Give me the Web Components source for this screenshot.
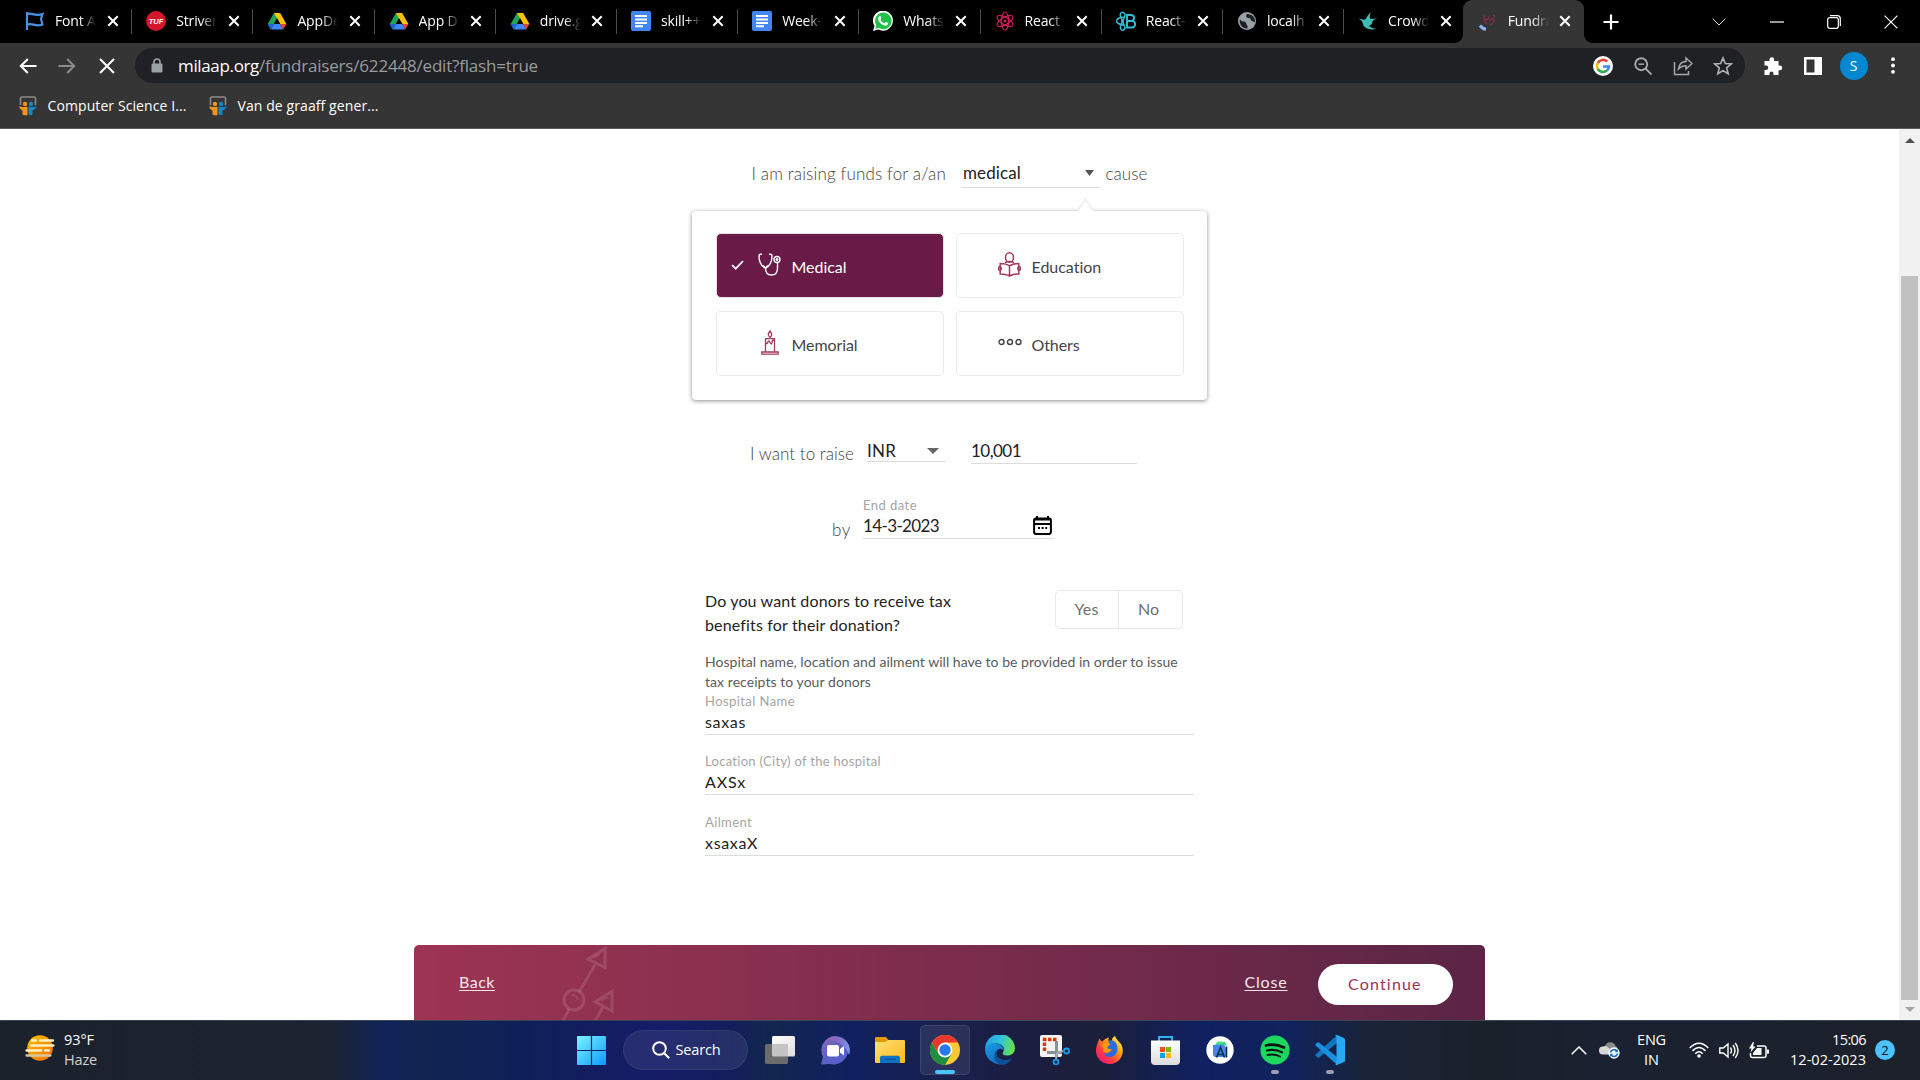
<!DOCTYPE html>
<html lang="en"><head><meta charset="utf-8"><title>Fundraiser edit</title>
<style>
html,body{margin:0;width:1920px;height:1080px;overflow:hidden;background:#fff}
body{display:flex;flex-direction:column;font-family:"Open Sans","Noto Sans",sans-serif}
</style></head><body>
<tab-strip></tab-strip>
<tool-bar></tool-bar>
<bookmark-bar></bookmark-bar>
<page-view></page-view>
<task-bar></task-bar>
<script>
const atom=(c,w)=>`<g fill="none" stroke="${c}" stroke-width="${w}"><ellipse cx="10" cy="10" rx="9" ry="3.6" transform="rotate(30 10 10)"/><ellipse cx="10" cy="10" rx="9" ry="3.6" transform="rotate(90 10 10)"/><ellipse cx="10" cy="10" rx="9" ry="3.6" transform="rotate(150 10 10)"/></g><circle cx="10" cy="10" r="1.6" fill="${c}"/>`;
const drive=`<path d="M7 2h6.2L6.8 13.2 3.7 18.4.7 13z" fill="#1ea55b"/><path d="M7 2h6.2l6.2 11h-6.2z" fill="#ffc107"/><path d="M.7 13h6.4l-3.2 5.6z" fill="#1a63d9"/><path d="M7.1 13h6.2l2.9 5.6H3.9z" fill="#4285f4"/><path d="M13.3 13h6.1l-3.2 5.6z" fill="#ea4335"/><path d="M10 7.3l3.3 5.7H6.8z" fill="#000"/>`;
const doc=`<rect x="0" y="0" width="20" height="20" rx="2" fill="#4285f4"/><path d="M4 5h12M4 8.5h12M4 12h12M4 15.3h8" stroke="#fff" stroke-width="1.9"/>`;
// name: [width, height, markup]
const ICONS={
flag:[20,20,`<path d="M2 1v18M2 3.500c4-3 7 2.500 15.500-.5l-1.500 5 1.500 5.500c-7 3-11-2.500-15.500.500" fill="none" stroke="#4a90e2" stroke-width="2.200"/>`],
tuf:[20,20,`<circle cx="10" cy="10" r="10" fill="#d5152b"/><text x="10" y="13" font-family="Liberation Sans" font-weight="700" font-style="italic" font-size="7.500" text-anchor="middle" fill="#fff">TUF</text>`],
drive:[20,20,drive],doc:[20,20,doc],
whats:[20,20,`<path d="M0 20l1.500-5A10 10 0 1 1 5.500 18.600z" fill="#fff"/><path d="M2.200 17.800l1-3.600A8.300 8.300 0 1 1 6 17z" fill="#20c04b"/><path d="M6 5.600c1-1 1.600-.4 2 .8.5 1.200.2 1.500-.5 2.300.8 1.700 2 2.800 3.800 3.600l1.200-1.300c.6-.4 2.600.7 2.700 1.200-.2 2-2 2.800-3.600 2.300-3.600-1-6-3.600-6.500-6.300 0-1 .300-2 .9-2.600z" fill="#fff"/>`],
react:[20,20,atom('#d01c54',1.200)],
rb:[20,20,`<g fill="none" stroke="#35b8d3" stroke-width="1.500"><path d="M9 3C6-.5 3 2 5 6.500c2 5 4 9 4 11-2 3-6 2-4-4 2-4 4-7 4-10.500zM8 6C4 6 .5 8 .5 10S4 14 8 14"/></g><path d="M11 4h4a3 3 0 0 1 0 6h-4zM11 10h5a3.200 3.200 0 0 1 0 6.400h-5z" fill="none" stroke="#35b8d3" stroke-width="2"/><circle cx="6.500" cy="10" r="1.500" fill="#35b8d3"/>`],
globe:[20,20,`<circle cx="10" cy="10" r="9" fill="#9aa0a6"/><path d="M3 8c2 4 5 1 6 4s2 2 1.500 5.500c-5 .5-9-5-7.500-9.500zM10 3c-2 2-.5 4 2 4s1 3 4 3.500 1 2 2 1c.5-4-1.500-8-8-8.500z" fill="#202124"/>`],
bird:[20,20,`<path d="M1 7.500c2 .5 4.500 1.500 6 1 1.500-1 3-5 6-7.500-1.500 3-1.500 5-.500 7C14 7.500 16 7.800 19 7.500c-2.500 1-4 1.500-4.500 3-.3 3-2 4-4 4.500 2 1 4 2.500 8 2.800-4 1.200-9.500.7-12-2C4 13.500 6.500 12 1 7.500z" fill="#3fbcb1"/>`],
mila:[20,20,`<path d="M7 4c-2 3-1 7 2 9M8 8c2 2 3-1 3-3M12 10c1.500-3 4-4 4-1s-2 4-4 5M15 4.500c1-1 2 0 1.500 1.500M6 7l3 2" fill="none" stroke="#8c2a50" stroke-width="1.200"/><path d="M2 14.500q2.500 3.300 6 3.800" fill="none" stroke="#8ab4f8" stroke-width="3"/>`],
x:[12,12,`<path d="M1.300 1.300l9.400 9.400M10.700 1.300l-9.400 9.400" stroke="currentColor" stroke-width="2"/>`],
plus:[16,16,`<path d="M8 .5v15M.5 8h15" stroke="#fff" stroke-width="2.200"/>`],
wchev:[14,8,`<path d="M.7.7L7 7 13.300.7" fill="none" stroke="#ddd" stroke-width="1"/>`],
wmin:[14,2,`<path d="M0 1h14" stroke="#fff" stroke-width="1.200"/>`],
wrest:[14,14,`<rect x=".7" y="2.700" width="10.600" height="10.600" rx="2" fill="none" stroke="#fff" stroke-width="1.200"/><path d="M3 .7h7.300a3 3 0 0 1 3 3V11" fill="none" stroke="#fff" stroke-width="1.200"/>`],
wx:[14,14,`<path d="M.6.6l12.800 12.800M13.400.6L.6 13.400" stroke="#fff" stroke-width="1.200"/>`],
back:[18,16,`<path d="M17.500 8H1.800M8.800 1L1.800 8l7 7" fill="none" stroke="#fff" stroke-width="2"/>`],
fwd:[18,16,`<path d="M.5 8h15.700M9.200 1l7 7-7 7" fill="none" stroke="#8b8b8b" stroke-width="2"/>`],
stop:[16,16,`<path d="M1 1l14 14M15 1L1 15" stroke="#fff" stroke-width="2"/>`],
lock:[12,15,`<rect y="5.500" x=".5" width="11" height="9" rx="1.200" fill="#9aa0a6"/><path d="M3 6V4a3 3 0 0 1 6 0v2" fill="none" stroke="#9aa0a6" stroke-width="1.600"/>`],
google:[20,20,`<circle cx="10" cy="10" r="10" fill="#fff"/><g fill="none" stroke-width="2.600"><path d="M14.300 5.700A6 6 0 0 0 4.700 7.200" stroke="#ea4335"/><path d="M4.700 7.200a6 6 0 0 0 0 5.600" stroke="#fbbc05"/><path d="M4.700 12.800a6 6 0 0 0 9.200 1.700" stroke="#34a853"/><path d="M13.900 14.500A5.500 5.500 0 0 0 16 10.500H10" stroke="#4285f4"/></g>`],
zoomo:[18,18,`<g fill="none" stroke="#a5a7aa" stroke-width="1.900"><circle cx="7.200" cy="7.200" r="6"/><path d="M11.500 11.500l6 6"/><path d="M4.500 7.200h5.500" stroke-width="1.500"/></g>`],
share:[20,20,`<g fill="none" stroke="#a5a7aa" stroke-width="1.500"><path d="M1.500 6v12.500h14V15"/><path d="M13 2l6 5.500-6 5.500v-3.200c-3.500 0-5.500 1-7.500 3.200.5-4 3-7.500 7.500-7.500z"/></g>`],
star:[20,20,`<path d="M10 2l2.300 5.500 6 .5-4.600 3.900 1.500 5.900L10 14.600 4.800 17.800l1.500-5.900L1.700 8l6-.5z" fill="none" stroke="#b0b2b5" stroke-width="1.600"/>`],
puzzle:[20,20,`<path d="M1.500 5h5V3.500a2.300 2.300 0 0 1 4.600 0V5h4.400v4.500h1.300a2.400 2.400 0 0 1 0 4.800h-1.300V19h-5v-1.500a2 2 0 0 0-4 0V19h-5v-5H3a2 2 0 0 0 0-4.500H1.500z" fill="#fff"/>`],
side:[18,18,`<path d="M0 0h18v18H0zM2.500 2.500v13h8v-13z" fill="#fff" fill-rule="evenodd"/>`],
dots:[4,17,`<circle cx="2" cy="2.200" r="1.900" fill="#fff"/><circle cx="2" cy="8.500" r="1.900" fill="#fff"/><circle cx="2" cy="14.800" r="1.900" fill="#fff"/>`],
slide:[18,20,`<path d="M1.500 9V2.500q0-1.500 1.500-1.500h12q1.500 0 1.500 1.500V9" fill="none" stroke="#8a8a8a" stroke-width="1.600"/><circle cx="6" cy="8" r="2.200" fill="#f7941e"/><circle cx="12" cy="8" r="2.200" fill="#1189c9"/><path d="M.5 10c2 1.500 5 1 8 .800V19c-2 .5-5 .3-5-1v-3.500C1.500 14 0 12 .5 10z" fill="#f7941e"/><path d="M17.500 10c-2 1.500-5 1-8 .800V18c2 2 4 1 4 0v-3.500c2-.5 4-2.500 4-4.500z" fill="#1189c9"/>`],
caret:[9,6,`<path d="M0 0h9L4.500 6z" fill="#555"/>`],caretw:[12,6,`<path d="M0 0h12L6 6z" fill="#666"/>`],
tip:[17,14,`<path d="M1 13L8.500 1 16 13v1H1z" fill="#fff"/><path d="M.8 13L8.500 1.200 16.200 13" fill="none" stroke="#f0f0f0" stroke-width="1.800"/>`],
check:[13,10,`<path d="M1 5l3.700 3.700L12 1" fill="none" stroke="#fff" stroke-width="1.700"/>`],
steth:[23,23,`<g fill="none" stroke="#fff" stroke-width="1.400"><path d="M4 1.200H2.500Q1 1.200 1 3c0 6 2 10 6.500 12C12 13 14 9 14 3q0-1.800-1.500-1.800H11"/><path d="M7.500 15c0 4 2 7 6 7s6-3 6-7V9.500"/><circle cx="19" cy="6.500" r="3"/><circle cx="19" cy="6.500" r=".8"/><path d="M5 12.500l2.500 2.500 2.500-2.500"/></g>`],
edu:[23,25,`<g fill="none" stroke="#a53a5f" stroke-width="1.500"><ellipse cx="11.500" cy="5.500" rx="4" ry="4.700"/><path d="M7 10.500q4.500-2 9 0M11.500 14C9 12 5 11.500 2.200 11.500V22c4 0 7 .5 9.300 2 2.300-1.500 5.300-2 9.300-2V11.500c-2.800 0-6.800.5-9.300 2.500zV24"/><ellipse cx="1.900" cy="16.500" rx="1.300" ry="2"/><ellipse cx="21.100" cy="16.500" rx="1.300" ry="2"/></g>`],
candle:[18,25,`<g fill="none" stroke="#a53a5f" stroke-width="1.300"><path d="M9 .8c2 2.500 2.500 5.700 0 6-2.500-.3-2-3.500 0-6zM9 7v2M4.500 22V8.700h9V22M.8 22h16.400v2.200H.8zM4.500 12c1.500 3 2.500 1 2.500-.5 1-2 2 1 2.500 2s2 0 1.500-2.500q1-1 2.500-1"/></g>`],
others:[24,8,`<g fill="none" stroke="#444" stroke-width="1.400"><circle cx="3.500" cy="4" r="2.500"/><circle cx="12" cy="4" r="2.500"/><circle cx="20.500" cy="4" r="2.500"/></g>`],
cal:[19,19,`<path d="M4 0v3M15 0v3" stroke="#000" stroke-width="2"/><rect x="1.100" y="2.600" width="16.800" height="15.300" rx="1.800" fill="none" stroke="#000" stroke-width="2"/><path d="M1 3.500h17M1 8h17" stroke="#000" stroke-width="1.800"/><path d="M5 12h9.500" stroke="#000" stroke-width="2" stroke-dasharray="2 1.600"/>`],
trail:[64,75,`<g fill="none" stroke="#fff" stroke-opacity=".12" stroke-width="3"><path d="M46 3.500L29 14l17 8.500zM37 18L20 47M53 46.500L36 57l17 9zM44 62l-8 14M10 64l-6 12"/><circle cx="15" cy="55" r="10"/></g><path d="M13 50q5 0 6 5M34 13l7-4M42 56l7-4" fill="none" stroke="#fff" stroke-opacity=".1" stroke-width="2"/>`],
up:[10,5,`<path d="M5 0l5 5H0z" fill="#505050"/>`],down:[10,5,`<path d="M0 0h10L5 5z" fill="#a3a3a3"/>`],
haze:[30,28,`<defs><linearGradient id="g" x1="0" y1="0" x2="1" y2="1"><stop offset="0" stop-color="#ffc400"/><stop offset="1" stop-color="#f06a0a"/></linearGradient></defs><circle cx="15" cy="14" r="12.800" fill="url(#g)"/><g stroke="#fff0c4" stroke-width="2.300" stroke-linecap="round"><path d="M7 6.500h4M15 6.500h13M6 11.500h22.500M1.500 16.500h15M20 16.500h4"/><path d="M1.500 21.500h24" stroke="#d8c79c"/></g>`],
win:[29,29,`<defs><linearGradient id="g" x1="0" y1="0" x2="1" y2="1"><stop offset="0" stop-color="#7df3ff"/><stop offset="1" stop-color="#0c9bff"/></linearGradient></defs><path d="M0 1q0-1 1-1h12.900v13.900H0zM15.100 0H28q1 0 1 1v12.900H15.100zM0 15.100h13.900V29H1q-1 0-1-1zM15.100 15.100H29V28q0 1-1 1H15.100z" fill="url(#g)"/>`],
search:[18,18,`<circle cx="7.500" cy="7.500" r="6.300" fill="none" stroke="#fff" stroke-width="2"/><path d="M12 12l5.200 5.200" stroke="#fff" stroke-width="2"/>`],
task:[30,28,`<defs><linearGradient id="g" x1="0" y1="0" x2="1" y2="1"><stop offset="0" stop-color="#fff"/><stop offset="1" stop-color="#ddd"/></linearGradient></defs><rect x="7" y="0" width="23" height="20.500" rx="1.500" fill="url(#g)"/><rect x="0" y="8" width="23" height="20" rx="1.500" fill="#6b6b6b"/><path d="M7 8h16v12.500H8.500Q7 20.500 7 19z" fill="#c4c4c4"/>`],
chat:[29,29,`<defs><linearGradient id="g" x1="0" y1="0" x2="1" y2="1"><stop offset="0" stop-color="#8f6cb5"/><stop offset=".5" stop-color="#5b5fc7"/><stop offset="1" stop-color="#5560d0"/></linearGradient><linearGradient id="h" x1="0" y1="0" x2="1" y2="0"><stop offset=".4" stop-color="#a06cc0" stop-opacity=".5"/><stop offset="1" stop-color="#7aa0f5"/></linearGradient></defs><path d="M14.500 0A14.300 14.300 0 1 1 9 28L0 28.500 2 21A14.300 14.300 0 0 1 14.500 0z" fill="url(#g)"/><path d="M14.500 0A14.300 14.300 0 0 1 28 19Q24 6 6 3 10 0 14.500 0z" fill="url(#h)"/><rect x="6" y="9" width="12" height="11.500" rx="2" fill="#fff"/><path d="M19 13l4-3v9.500l-4-3z" fill="#fff"/>`],
folder:[30,26,`<defs><linearGradient id="g" x1="0" y1="0" x2="1" y2="1"><stop offset="0" stop-color="#ffdf77"/><stop offset="1" stop-color="#fbb918"/></linearGradient></defs><path d="M0 1q0-1 1-1h10l2.500 3-3 3H0z" fill="#e29a00"/><path d="M0 5h10l3-2h16q1 0 1 1v21q0 1-1 1H1q-1 0-1-1z" fill="url(#g)"/><path d="M5 26v-5.500q0-1.800 2-1.800h16q2 0 2 1.800V26z" fill="#0c72c4"/><path d="M9 22.300h12" stroke="#07518f" stroke-width="1"/>`],
chrome:[30,30,`<circle cx="15" cy="15" r="15" fill="#fcc934"/><path d="M2 7.500A15 15 0 0 0 15 30l6.500-11.200L15 15 8.500 18.800z" fill="#1e8e3e"/><path d="M15 15L8.500 18.800 2 7.500A15 15 0 0 1 28 7.500H15z" fill="#e8372c"/><circle cx="15" cy="15" r="7.400" fill="#fff"/><circle cx="15" cy="15" r="5.700" fill="#2779ea"/>`],
edge:[30,30,`<defs><linearGradient id="g" x1="0" y1=".3" x2="1" y2=".5"><stop offset="0" stop-color="#1fa0e8"/><stop offset=".5" stop-color="#2fc3d8"/><stop offset="1" stop-color="#6be048"/></linearGradient><linearGradient id="h" x1="0" y1="0" x2="1" y2="1"><stop offset="0" stop-color="#1b9de8"/><stop offset="1" stop-color="#0d5aa8"/></linearGradient></defs><path d="M0 15A15 15 0 0 1 30 13c0 5-3.500 7.500-8 7.500-4 0-5-1.500-4-3 3-6-2-9-7-9-6 0-10 3-11 6.500z" fill="url(#g)"/><path d="M0 15C1 10 5 8.300 10 8.300c5 0 8.500 3 8.200 6.700-3-3-8 0-6.700 5 1.500 4.500 8 6.500 15 4A15 15 0 0 1 0 15z" fill="url(#h)"/><path d="M11.500 15c-5 6-1 13.500 5.500 14.900 4-.4 7.500-2.500 10-6-7 3-14 1-15.500-4z" fill="#0c5099"/>`],
snip:[30,30,`<rect width="22" height="22" rx="2" fill="#f2f3f4"/><path d="M4.500 16V4.500H17" fill="none" stroke="#d83b01" stroke-width="3.400" stroke-dasharray="3.500 1.500"/><path d="M16.500 6v16M7 17.500h15" stroke="#8a9096" stroke-width="3"/><path d="M17 18l6-2M17 18l-1 6" stroke="#a9afb5" stroke-width="2"/><circle cx="26.500" cy="16" r="2.500" fill="none" stroke="#1a9be8" stroke-width="1.800"/><circle cx="16" cy="27" r="2.400" fill="none" stroke="#1a9be8" stroke-width="1.800"/>`],
firefox:[28,28,`<defs><linearGradient id="g" x1="1" y1="0" x2=".1" y2="1"><stop offset=".1" stop-color="#fff44f"/><stop offset=".4" stop-color="#ff980e"/><stop offset=".7" stop-color="#ff3647"/><stop offset="1" stop-color="#e31587"/></linearGradient></defs><path d="M3.500 2.500q1 2.500 3 3C8 3.500 10.500 2 13 1.500c-1 2-1 4 2 5.500l1.500-5Q18 .500 19 0c1 3 3 4.500 6 8 5 9-1 20-11 20C3 28-2.500 18 1 9c.5-2 1.500-4 2.500-6.500z" fill="url(#g)"/><path d="M13 4.500c5-1.500 9 3 8.500 9-.5 5-4 7.500-8 7.500-3 0-5-1.500-5.500-4 3 1.500 5 0 6.500-2-1.500-1-3.500-1-4-3z" fill="#2a6be0"/><path d="M6 8l6.500-1.500 2 2c-2 1-2.500 2-3.500 3 1 2 3.500 1.500 5 2-1.500 2.500-5 4-8.500 2.500z" fill="#ff980e"/>`],
store:[29,29,`<defs><linearGradient id="g" x1="0" y1="0" x2="0" y2="1"><stop offset="0" stop-color="#fff"/><stop offset="1" stop-color="#dcdcdc"/></linearGradient></defs><path d="M8 6V1h13v5" fill="none" stroke="#2cb3ee" stroke-width="2"/><path d="M0 4.500h29V25q0 4-4 4H4q-4 0-4-4z" fill="url(#g)"/><path d="M9 11h5v5H9z" fill="#f25022"/><path d="M15 11h5v5h-5z" fill="#7fba00"/><path d="M9 17h5v5H9z" fill="#00a4ef"/><path d="M15 17h5v5h-5z" fill="#ffb900"/>`],
studio:[28,28,`<circle cx="14" cy="14" r="13.700" fill="#fff"/><path d="M9 9.500Q10 6 13 5.500l6 .5 2 3.500z" fill="#3ddc84"/><path d="M7 9l11-.5 2 4v8.500H8.500L7 19z" fill="#4285f4"/><path d="M10.500 21.500l4-10 4 10M12 18.500h5M20.500 10.500v11" fill="none" stroke="#073042" stroke-width="1.600"/>`],
spotify:[30,30,`<circle cx="15" cy="15" r="14.600" fill="#1ed760"/><g fill="none" stroke="#0a1a10" stroke-linecap="round"><path d="M6 10.500q9-2.500 18 2" stroke-width="2.800"/><path d="M7 15.500q8-2 15 1.800" stroke-width="2.300"/><path d="M7.500 20q7-1.500 12.500 1.500" stroke-width="1.900"/></g>`],
code:[30,30,`<path d="M22 .3V8L4 22.500Q3 23.300 2 22.300L.5 20.700Q0 20 .8 19.300z" fill="#1277be"/><path d="M22 29.700V22L4 7.500Q3 6.700 2 7.700L.5 9.300Q0 10 .8 10.700z" fill="#1b8fe0"/><path d="M22 0l7 3q1 .5 1 1.500v21q0 1-1 1.500l-7 3q-1 .2-2-1 1.500.5 1.500-1V2q0-1.500-1.500-1 1-1.200 2-1z" fill="#29a8f3"/>`],
tchev:[16,9,`<path d="M.7 8.300L8 1l7.300 7.300" fill="none" stroke="#fff" stroke-width="1.500"/>`],
cloud:[21,18,`<path d="M6 5.500A5.500 5.500 0 0 1 16.500 5 4 4 0 0 1 17 12l-7-3z" fill="#8b8b8b"/><path d="M4 13.500A4 4 0 0 1 4 5.500c2-1 4-.5 5 1l8 5.500-1 1.500z" fill="#d8d8d8"/><circle cx="15" cy="12" r="5.700" fill="#fff"/><path d="M11.500 11.500a3.500 3.500 0 0 1 6.500-1M18.500 12.500a3.500 3.500 0 0 1-6.500 1.200" fill="none" stroke="#0f6cbd" stroke-width="1.600"/><path d="M18.800 8v3.300h-3zM11.200 16v-3.300h3z" fill="#0f6cbd"/>`],
wifi:[20,16,`<g fill="none" stroke="#fff" stroke-width="1.500"><path d="M.7 6q9.300-9.500 18.600 0M3.500 9q6.500-7 13 0M6.300 11.800q3.700-4 7.400 0"/></g><circle cx="10" cy="14" r="1.800" fill="#fff"/>`],
vol:[20,17,`<g fill="none" stroke="#fff" stroke-width="1.400"><path d="M.8 6v5h3.500L9 15V2L4.300 6z"/><path d="M11.500 5.500q2 3 0 6M14 3q4 5.500 0 11M16.300 1q5.500 7.500 0 15"/></g>`],
bat:[20,17,`<path d="M8 4h7q2 0 2 2v7.500q0 2-2 2H3.500q-2 0-2-2V11" fill="none" stroke="#fff" stroke-width="1.500"/><path d="M18 7.500h1.200q.8 0 .8.800V11q0 .8-.8.800H18zM4 13V11L8 6h4.500v7z" fill="#fff"/><path d="M4 0L0 6.500h2.500L1.500 10.500 6.500 4.500H4L5 0z" fill="#fff"/>`]
};
// Shared base: a class with open shadow root filled from view()
class El extends HTMLElement{
  connectedCallback(){ if(this.shadowRoot)return;
    this.attachShadow({mode:'open'}).innerHTML=this.view(); }
  a(n,d=''){return this.getAttribute(n)??d}
}
const def=(tag,view)=>customElements.define(tag,class extends El{view(){return view(this)}});
const ic=(n,s='')=>`<ui-icon name="${n}" style="${s}"></ui-icon>`;
const ft=(t,w,s='',c='')=>`<fit-text w="${w}" class="${c}" style="${s}">${t}</fit-text>`;

def('ui-icon',e=>{const [w,h,m]=ICONS[e.a('name')];
 return `<style>:host{display:block;flex:none;width:${w}px;height:${h}px}svg{display:block}</style><svg width="${w}" height="${h}" viewBox="0 0 ${w} ${h}">${m}</svg>`});
def('icon-cell',e=>`<style>:host{display:flex;flex:none;width:${e.a('w','40')}px;height:100%;align-items:center;justify-content:center}</style><slot></slot>`);

def('chrome-tab',e=>`<style>:host{display:flex;flex:none;box-sizing:border-box;position:relative;width:121.200px;height:43px;align-items:center;padding:0 0 1px 14.500px;color:#fff}
:host::after{content:"";position:absolute;right:-.5px;top:9px;height:25px;width:1px;background:#4c4c4c}
:host([last])::after{display:none}
:host([active]){background:#353535;border-radius:9px 9px 0 0;margin-left:-1.500px;width:121px}
:host([active])::after{left:-8px;right:-8px;width:auto;top:35px;height:8px;background:radial-gradient(circle at 0 0,transparent 7.500px,#353535 8px) left/8px 8px no-repeat,radial-gradient(circle at 100% 0,transparent 7.500px,#353535 8px) right/8px 8px no-repeat}
.t{margin-left:10px;width:42px;overflow:hidden;white-space:nowrap;font-size:14px;letter-spacing:-.15px;line-height:20px;padding-bottom:1px;-webkit-mask-image:linear-gradient(90deg,#000 58%,transparent 98%);mask-image:linear-gradient(90deg,#000 58%,transparent 98%)}
.c{margin-left:9.500px}</style>${ic(e.a('icon'))}<div class="t"><slot></slot></div><div class="c">${ic('x')}</div>`);

def('tab-strip',()=>{const tabs=[['flag','Font A'],['tuf','Striver'],['drive','AppDe'],['drive','App D'],['drive','drive.g'],['doc','skill++'],['doc','Week-'],['whats','Whats'],['react','React |'],['rb','React-'],['globe','localh'],['bird','Crowd'],['mila','Fundra']];
 return `<style>:host{display:flex;flex:none;height:43px;background:#000;padding-left:10.500px;align-items:center}.w{display:flex;margin-left:auto;height:38px}</style>${tabs.map(([i,t],k)=>`<chrome-tab icon="${i}" ${k==11?'last':''} ${k==12?'active':''}>${t}</chrome-tab>`).join('')}<icon-cell w="40" style="margin-left:7px">${ic('plus')}</icon-cell><div class="w">${['wchev','wmin','wrest','wx'].map(n=>`<icon-cell w="57.300">${ic(n)}</icon-cell>`).join('')}</div>`});

def('tool-bar',()=>`<style>:host{display:flex;flex:none;height:45px;background:#353535;align-items:center;padding-left:8px}
.o{display:flex;align-items:center;box-sizing:border-box;width:1610px;height:35px;border-radius:18px;background:#202124;margin:0 7px 0 8px;padding:0 2px 0 16px;font-size:17px;color:#9a9b9e}
.u{margin-left:15px;margin-right:auto;display:flex}
.av{width:28px;height:28px;border-radius:50%;background:#0288d1;color:#fff;font-size:14px;line-height:28px;text-align:center}</style>
<icon-cell w="39">${ic('back')}</icon-cell><icon-cell>${ic('fwd')}</icon-cell><icon-cell>${ic('stop')}</icon-cell>
<div class="o">${ic('lock')}<div class="u">${ft('milaap.org',81,'color:#fff')}${ft('/fundraisers/622448/edit?flash=true',279)}</div>
${['google','zoomo','share','star'].map(n=>`<icon-cell>${ic(n)}</icon-cell>`).join('')}</div>
<icon-cell w="41">${ic('puzzle')}</icon-cell><icon-cell>${ic('side')}</icon-cell><icon-cell w="41"><div class="av">S</div></icon-cell><icon-cell w="38">${ic('dots')}</icon-cell>`);

def('bookmark-bar',()=>`<style>:host{display:flex;flex:none;box-sizing:border-box;height:41px;background:#353535;border-bottom:1px solid #5c5c5c;align-items:center;padding:0 0 5px 19px;color:#fff;font-size:14px}</style>${ic('slide')}${ft('Computer Science I...',139,'margin-left:10.500px')}${ic('slide','margin-left:22px')}${ft('Van de graaff gener...',141,'margin-left:11px')}`);

def('cause-card',e=>{const on=e.hasAttribute('selected');return `<style>:host{display:flex;box-sizing:border-box;width:228.500px;height:65px;border:1px solid ${on?'#e6dfe3':'#ebebeb'};border-radius:5px;align-items:center;background:${on?'#691a46':'#fff'};color:${on?'#fff':'#444'};font-size:16px}
.k{width:30px;padding-left:14px;box-sizing:border-box;margin-bottom:1px}.i{width:46px;display:flex;justify-content:center;padding-bottom:3px;margin-right:-1px}.t{padding-top:1px}</style><div class="k">${on?ic('check'):''}</div><div class="i">${ic(e.a('icon'))}</div><div class="t">${ft(e.a('label'),e.a('w'))}</div>`});

def('cause-menu',()=>`<style>:host{display:grid;position:relative;box-sizing:border-box;width:515px;height:189.500px;margin:22.500px 0 0 692px;padding:22.500px 0 0 23.500px;grid-template-columns:228.500px 228.500px;grid-template-rows:65px 65px;gap:13px 11.500px;background:#fff;border-radius:4px;box-shadow:0 1px 4px rgba(0,0,0,.45)}
.tip{position:absolute;left:384.500px;top:-13px}</style><div class="tip">${ic('tip')}</div>
<cause-card selected icon="steth" label="Medical" w="55"></cause-card><cause-card icon="edu" label="Education" w="70"></cause-card><cause-card icon="candle" label="Memorial" w="66"></cause-card><cause-card icon="others" label="Others" w="48"></cause-card>`);

def('text-field',e=>`<style>:host{display:block;box-sizing:border-box;height:43px;width:${e.a('width','489')}px;border-bottom:1px solid #dcdcdc}
.l{font-size:13px;line-height:18px;height:18px;color:#a5a5a5}.v{display:flex;justify-content:space-between;font-size:${e.a('fs','16')}px;line-height:24px;height:24px;color:#222}</style><div class="l">${ft(e.a('label'),e.a('lw'))}</div><div class="v">${ft(e.a('value'),e.a('vw'))}<slot></slot></div>`);

def('yes-no',()=>`<style>:host{display:flex;box-sizing:border-box;width:128px;height:39px;border:1px solid #e8e8e8;border-radius:5px;font-size:16px;line-height:36px;color:#6e6e6e;text-align:center}div{width:62px;padding-right:1px;box-sizing:border-box}div+div{border-left:1px solid #e8e8e8;width:64px;padding-right:4px}</style><div>${ft('Yes',24)}</div><div>${ft('No',21)}</div>`);

def('action-bar',()=>`<style>:host{display:flex;box-sizing:border-box;width:1071px;height:75px;margin:89px 0 0 414px;border-radius:5px 5px 0 0;background:linear-gradient(90deg,#9d3453,#5b2545);color:#fff;font-size:16px;align-items:flex-start;padding-left:45px}
.l{line-height:22px;margin-top:26px;color:#f3e6ec}.l fit-text{text-decoration:underline;text-underline-offset:2px}
.p{margin:19px 0 0 30px;width:135px;height:41px;border-radius:21px;background:#fff;color:#9b3355;text-align:center;line-height:39px}</style>
<div class="l">${ft('Back',36)}</div>${ic('trail','margin-left:64px')}<div class="l" style="margin-left:621.500px">${ft('Close',43)}</div><div class="p">${ft('Continue',74)}</div>`);

def('scroll-bar',()=>`<style>:host{display:flex;flex-direction:column;box-sizing:border-box;align-items:center;width:21px;height:891px;background:#f1f1f1;padding:9px 0 8px}.t{width:17px;height:724px;background:#c1c1c1;margin:133px 0 0}.d{margin-top:auto}</style>${ic('up')}<div class="t"></div><div class="d">${ic('down')}</div>`);

def('page-view',()=>`<style>:host{display:flex;flex:none;height:891px;background:#fff;font-family:Lato,"Open Sans",sans-serif;color:#6c6c6c;overflow:hidden}
main{width:1899px}.r{display:flex;align-items:flex-start;font-size:17px;line-height:22px}
.s{display:flex;justify-content:space-between;align-items:center;box-sizing:border-box;border-bottom:1px solid #dcdcdc;color:#222}
.light{font-weight:300;color:#444}
.q{display:flex;padding-left:705px;margin-top:48.500px;font-size:16px;line-height:24px;color:#222;height:48px}.q>div{width:350px}
.h{margin:14.500px 0 0 705px;font-size:14px;line-height:20px;color:#5b5b5b}.f{display:flex;flex-direction:column;gap:17.600px;padding-left:705px}</style>
<main>
<div class="r" style="padding:33px 0 0 751.500px">${ft('I am raising funds for a/an',194.500,'margin-top:.500px','light')}
<div class="s" style="width:138px;height:26px;margin-left:16px;padding:0 6px 3px 1px">${ft('medical',58)}${ic('caret')}</div>${ft('cause',42,'margin:.500px 0 0 5.500px','light')}</div>
<cause-menu></cause-menu>
<div class="r" style="padding:40px 0 0 750px">${ft('I want to raise',104,'margin-top:3px','light')}
<div class="s" style="width:79px;height:22px;margin-left:13px;padding:0 7px 0 0">${ft('INR',29)}${ic('caretw')}</div>
<div class="s" style="width:166px;height:24px;margin-left:25px;padding:0 0 1px 0">${ft('10,001',50)}</div></div>
<div class="r" style="padding:31px 0 0 832px">${ft('by',19,'margin:22.500px 12px 0 0','light')}<text-field label="End date" lw="54" value="14-3-2023" vw="76" fs="17" width="191">${ic('cal','margin:2px 2px 0 0')}</text-field></div>
<div class="q"><div>${ft('Do you want donors to receive tax',246)}<br>${ft('benefits for their donation?',195)}</div><yes-no style="margin-top:1px"></yes-no></div>
<div class="h">${ft('Hospital name, location and ailment will have to be provided in order to issue',473)}<br>${ft('tax receipts to your donors',166)}</div>
<div class="f"><text-field label="Hospital Name" lw="90" value="saxas" vw="41"></text-field><text-field label="Location (City) of the hospital" lw="176" value="AXSx" vw="41"></text-field><text-field label="Ailment" lw="47" value="xsaxaX" vw="53"></text-field></div>
<action-bar></action-bar>
</main><scroll-bar></scroll-bar>`);

def('task-app',e=>`<style>:host{display:flex;flex:none;position:relative;width:55px;height:60px;align-items:center;justify-content:center}
.b{display:flex;align-items:center;justify-content:center;box-sizing:border-box;width:50px;height:50px;border-radius:5px}
:host([active]) .b{background:rgba(255,255,255,.08);border:1px solid rgba(255,255,255,.09)}
:host([active])::after,:host([open])::after{content:"";position:absolute;bottom:6px;left:50%;width:20px;height:4px;margin-left:-10px;border-radius:2px;background:#4cc2ff}
:host([open])::after{width:8px;margin-left:-4px;background:#9a9db0}</style><div class="b">${ic(e.a('icon'))}</div>`);

def('task-bar',()=>`<style>:host{display:flex;flex:none;box-sizing:border-box;height:60px;align-items:center;color:#fff;font-size:14.500px;line-height:20px;background:linear-gradient(90deg,#1c222c 0,#1b2330 330px,#10245a 385px,#122450 420px,#0f2058 520px,#151c66 660px,#131e5c 730px,#13264e 770px,#102060 850px,#19204e 940px,#1b1e42 1010px,#1b1f38 1100px,#102060 1200px,#10235c 1290px,#1a2338 1370px,#1b212b 1480px,#1a2130 1600px,#1c212b);box-shadow:inset 0 1px #3b4555}
.w{display:flex;align-items:center;width:563.500px;box-sizing:border-box;padding-left:25px;height:100%}.w div{margin-left:9px}
.s{display:flex;align-items:center;box-sizing:border-box;width:125px;height:40px;border-radius:20px;margin:0 4.500px;padding-left:28px;background:rgba(255,255,255,.08);border:1px solid rgba(255,255,255,.06)}
.tray{margin-left:auto;display:flex;align-items:center;height:100%;padding-right:25px}.n{width:20px;height:20px;border-radius:50%;background:#4cc2ff;color:#111;text-align:center;font-size:13px;margin-left:9px}.e{width:57px;text-align:center;margin-right:3px}.e div{margin-left:-2px}.c{width:92px;text-align:right}</style>
<div class="w">${ic('haze','margin-bottom:4px')}<div>${ft('93°F',30)}<br>${ft('Haze',33,'color:#cfd2d6')}</div></div>
<task-app icon="win"></task-app><div class="s">${ic('search')}${ft('Search',45,'margin-left:5.500px')}</div>
${['task','chat','folder','chrome','edge','snip','firefox','store','studio','spotify','code'].map(n=>`<task-app icon="${n}" ${n=='chrome'?'active':''} ${n=='spotify'||n=='code'?'open':''}></task-app>`).join('')}
<div class="tray"><icon-cell w="30">${ic('tchev')}</icon-cell><icon-cell w="30">${ic('cloud')}</icon-cell><div class="e"><div>${ft('ENG',29)}<br>${ft('IN',15)}</div></div><icon-cell w="30">${ic('wifi')}</icon-cell><icon-cell w="30">${ic('vol')}</icon-cell><icon-cell w="30">${ic('bat')}</icon-cell><div class="c">${ft('15:06',34)}<br>${ft('12-02-2023',76)}</div><div class="n">2</div></div>`);

// Inline run of text tracked to an exact advance width
customElements.define('fit-text',class extends El{
  view(){return '<style>:host{display:inline-block;white-space:nowrap;text-align:left}</style><slot></slot>'}
  connectedCallback(){super.connectedCallback();
    const w=+this.a('w'),n=this.textContent.length,now=this.getBoundingClientRect().width;
    this.style.letterSpacing=((w-now)/n).toFixed(3)+'px';this.style.width=w+'px'}
});
</script>
</body></html>
